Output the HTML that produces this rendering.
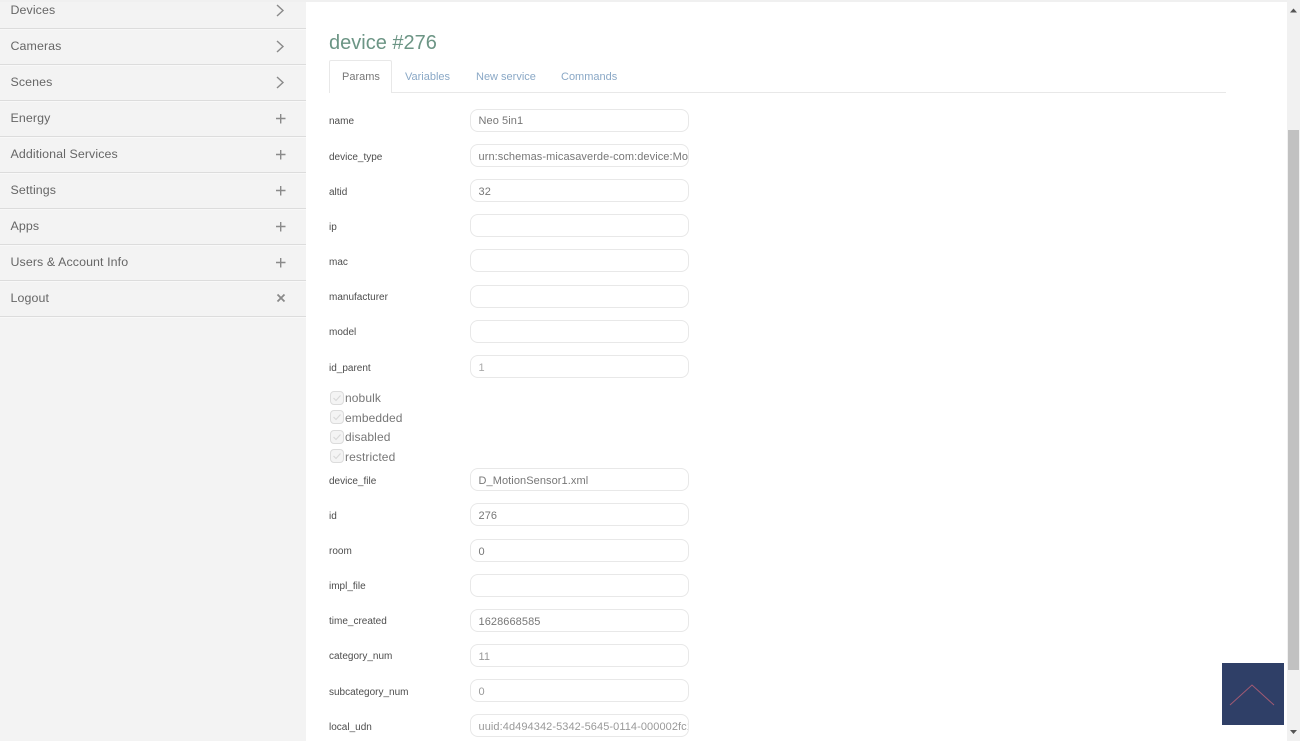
<!DOCTYPE html>
<html><head><meta charset="utf-8"><style>
html,body{margin:0;padding:0;background:#fff;width:1300px;height:741px;overflow:hidden}
body{position:relative;font-family:"Liberation Sans",sans-serif}
div,span{position:absolute;white-space:nowrap}
.side{left:0;top:0;width:306px;height:741px;background:#f3f3f3}
.line{left:0;width:306px;height:1px;background:#dcdcdc;box-shadow:0 1px 0 #f8f8f8}
.m{left:10.5px;font-size:12.4px;color:#666;line-height:18px;letter-spacing:.1px}
.l{left:329px;font-size:10px;color:#4d4d4d;line-height:14px}
.i{left:470px;width:219px;height:23px;box-sizing:border-box;border:1px solid #e8e8e8;border-radius:8px;background:#fff;overflow:hidden;font-size:11px;line-height:23px;color:#777;padding-left:7.5px;padding-top:1px;letter-spacing:.08px}
.c{left:330px;width:14px;height:14px;box-sizing:border-box;border:1px solid #dcdcdc;border-radius:4px;background:#f4f4f4}
.ct{left:345px;font-size:12px;line-height:16px;color:#777;letter-spacing:.1px}
.t{font-size:11px;line-height:16px;top:68.500px;color:#8aa8c6}
</style></head><body>
<div class="side"></div>
<div style="left:0;top:0;width:1287px;height:2px;background:#f0f0f0"></div>

<div class="m" style="top:1px">Devices</div>
<div class="m" style="top:37px">Cameras</div>
<div class="m" style="top:73px">Scenes</div>
<div class="m" style="top:109px">Energy</div>
<div class="m" style="top:145px">Additional Services</div>
<div class="m" style="top:181px">Settings</div>
<div class="m" style="top:217px">Apps</div>
<div class="m" style="top:253px">Users &amp; Account Info</div>
<div class="m" style="top:289px">Logout</div>

<div class="line" style="top:28px"></div>
<div class="line" style="top:64px"></div>
<div class="line" style="top:100px"></div>
<div class="line" style="top:136px"></div>
<div class="line" style="top:172px"></div>
<div class="line" style="top:208px"></div>
<div class="line" style="top:244px"></div>
<div class="line" style="top:280px"></div>
<div class="line" style="top:316px"></div>

<svg style="position:absolute;left:0;top:0" width="306" height="320" fill="none" stroke="#8a8a8a" stroke-width="1.400">
<path d="M277 5l6 5.500-6 5.500M277 41l6 5.500-6 5.500M277 77l6 5.500-6 5.500"/>
<path d="M276 118.500h9.500M280.700 114v9.500M276 154.500h9.500M280.700 150v9.500M276 190.500h9.500M280.700 186v9.500M276 226.500h9.500M280.700 222v9.500M276 262.500h9.500M280.700 258v9.500"/>
<path d="M277.500 294.500l7 7M284.500 294.500l-7 7" stroke-width="1.800"/>
</svg>

<div style="left:329px;top:29.500px;font-size:20px;line-height:26px;color:#6c9585">device #276</div>

<div style="left:329px;top:92px;width:897px;height:1px;background:#e8e8e8"></div>
<div style="left:329px;top:60px;width:63px;height:33px;box-sizing:border-box;border:1px solid #e8e8e8;border-bottom:0;background:#fff;border-radius:2px 2px 0 0"></div>
<div class="t" style="left:342px;color:#777">Params</div>
<div class="t" style="left:405px">Variables</div>
<div class="t" style="left:476px">New service</div>
<div class="t" style="left:561px">Commands</div>

<div class="l" style="top:115px">name</div><div class="i" style="top:109px;padding-top:0">Neo 5in1</div>
<div class="l" style="top:151px">device_type</div><div class="i" style="top:144px">urn:schemas-micasaverde-com:device:MotionSensor:1</div>
<div class="l" style="top:186px">altid</div><div class="i" style="top:179px">32</div>
<div class="l" style="top:221px">ip</div><div class="i" style="top:214px"></div>
<div class="l" style="top:256px">mac</div><div class="i" style="top:249px"></div>
<div class="l" style="top:291px">manufacturer</div><div class="i" style="top:285px"></div>
<div class="l" style="top:326px">model</div><div class="i" style="top:320px"></div>
<div class="l" style="top:362px">id_parent</div><div class="i" style="top:355px;color:#aaa">1</div>

<div class="c" style="top:391px"></div><div class="ct" style="top:390px">nobulk</div>
<div class="c" style="top:410px"></div><div class="ct" style="top:410px">embedded</div>
<div class="c" style="top:430px"></div><div class="ct" style="top:429px">disabled</div>
<div class="c" style="top:449px"></div><div class="ct" style="top:449px">restricted</div>
<svg style="position:absolute;left:330px;top:390px" width="14" height="74" fill="none" stroke="#d8d8d8" stroke-width="1.100"><path d="M3.500 8l2.500 2.500 4.500-5M3.500 27l2.500 2.500 4.500-5M3.500 47l2.500 2.500 4.500-5M3.500 66l2.500 2.500 4.500-5"/></svg>

<div class="l" style="top:475px">device_file</div><div class="i" style="top:468px">D_MotionSensor1.xml</div>
<div class="l" style="top:510px">id</div><div class="i" style="top:503px">276</div>
<div class="l" style="top:545px">room</div><div class="i" style="top:539px">0</div>
<div class="l" style="top:580px">impl_file</div><div class="i" style="top:574px"></div>
<div class="l" style="top:615px">time_created</div><div class="i" style="top:609px">1628668585</div>
<div class="l" style="top:650px">category_num</div><div class="i" style="top:644px;color:#999">11</div>
<div class="l" style="top:686px">subcategory_num</div><div class="i" style="top:679px;color:#999">0</div>
<div class="l" style="top:721px">local_udn</div><div class="i" style="top:714px;color:#999">uuid:4d494342-5342-5645-0114-000002fc1234</div>

<div style="left:1287px;top:0;width:13px;height:741px;background:#f1f1f1"></div>
<div style="left:1288px;top:130px;width:11px;height:540px;background:#c1c1c1"></div>
<svg style="position:absolute;left:1287px;top:0" width="13" height="741" fill="#555"><path d="M3 12.500l3.500-4 3.500 4zM3 730l3.500 4 3.500-4z"/></svg>

<div style="left:1222px;top:663px;width:62px;height:62px;background:#2f3f67"></div>
<svg style="position:absolute;left:1222px;top:663px" width="62" height="62" fill="none" stroke="#a25a73" stroke-width="1"><path d="M8 42L30 22 52 42"/></svg>
</body></html>
